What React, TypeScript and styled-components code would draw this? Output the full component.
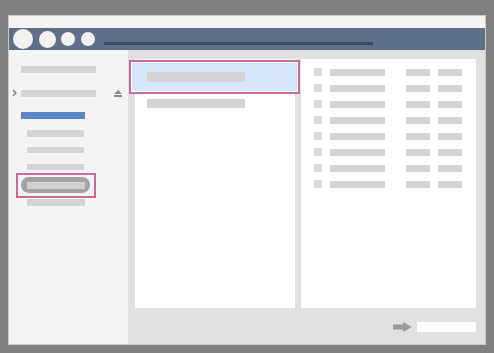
import styled, { createGlobalStyle } from "styled-components";

const GlobalStyle = createGlobalStyle`
  html, body {
    margin: 0;
    padding: 0;
    background: #808080;
    font-family: "Liberation Sans", Arial, sans-serif;
  }
`;

const Page = styled.div`
  width: 494px;
  height: 353px;
  padding: 15px 0 0 8px;
  box-sizing: border-box;
  background: #808080;
`;

const Window = styled.div`
  width: 478px;
  height: 330px;
  display: flex;
  flex-direction: column;
  background: #f4f4f4;
  outline: 1px solid #c9c9c9;
  outline-offset: -1px;
`;

const TitleStrip = styled.div`
  height: 13px;
  background: #f4f4f4;
`;

const Toolbar = styled.div`
  height: 22px;
  background: #5e7089;
  display: flex;
  align-items: center;
  padding-left: 5px;
`;

const Circle = styled.div<{ $size: number; $gap: number }>`
  width: ${({ $size }) => $size}px;
  height: ${({ $size }) => $size}px;
  border-radius: 50%;
  background: #f2f2f2;
  margin-left: ${({ $gap }) => $gap}px;
  flex-shrink: 0;
`;

const PathLine = styled.div`
  width: 269px;
  height: 3px;
  background: #3e4a5b;
  margin-left: 9px;
  align-self: flex-end;
  margin-bottom: 5px;
`;

const Body = styled.div`
  flex: 1;
  display: flex;
  min-height: 0;
`;

const Sidebar = styled.div`
  width: 120px;
  background: #f4f4f4;
  display: flex;
  flex-direction: column;
  padding-top: 16px;
  box-sizing: border-box;
`;

const Bar = styled.div<{ $w: number; $h?: number; $color?: string; $ml?: number }>`
  width: ${({ $w }) => $w}px;
  height: ${({ $h }) => $h ?? 7}px;
  margin-left: ${({ $ml }) => $ml ?? 0}px;
  background: ${({ $color }) => $color ?? "#d4d4d4"};
  flex-shrink: 0;
`;

const SideItem = styled.div<{ $top: number; $left: number }>`
  margin-top: ${({ $top }) => $top}px;
  margin-left: ${({ $left }) => $left}px;
  display: flex;
  align-items: center;
`;

const DeviceRow = styled.div`
  margin-top: 16px;
  padding-left: 4px;
  display: flex;
  align-items: center;
  height: 8px;
`;

const Chevron = styled.svg`
  width: 5px;
  height: 8px;
  margin-right: 4px;
`;

const Eject = styled.svg`
  width: 8px;
  height: 7px;
  margin-left: 18px;
`;

const SelectedSide = styled.div`
  position: relative;
  margin: 7px 0 0 13px;
  width: 69px;
  height: 16px;
  border-radius: 8px;
  background: #a3a3a3;
  display: flex;
  align-items: center;
  justify-content: center;
`;

const PinkFrame = styled.div<{ $t: number; $r: number; $b: number; $l: number }>`
  position: absolute;
  top: ${({ $t }) => $t}px;
  right: ${({ $r }) => $r}px;
  bottom: ${({ $b }) => $b}px;
  left: ${({ $l }) => $l}px;
  border: 2px solid #c96c9d;
  pointer-events: none;
`;

const Main = styled.div`
  flex: 1;
  background: #e1e1e1;
  display: flex;
  flex-direction: column;
`;

const Panels = styled.div`
  display: flex;
  gap: 6px;
  padding: 9px 10px 0 7px;
`;

const Panel = styled.div<{ $w: number }>`
  width: ${({ $w }) => $w}px;
  height: 249px;
  background: #ffffff;
  display: flex;
  flex-direction: column;
`;

const FolderList = styled(Panel)`
  padding-top: 4px;
  box-sizing: border-box;
`;

const FolderRow = styled.div`
  position: relative;
  height: 27px;
  display: flex;
  align-items: center;
  padding-left: 12px;
`;

const RowHighlight = styled.span`
  position: absolute;
  top: -3px;
  bottom: -4px;
  left: -6px;
  right: -5px;
  background: #d6e7f9;
  border: 2px solid #c96c9d;
  box-shadow: inset 0 0 0 1px #ffffff;
`;

const FolderBar = styled(Bar)`
  position: relative;
  z-index: 1;
`;

const FileList = styled(Panel)`
  padding-top: 9px;
  box-sizing: border-box;
  gap: 8px;
`;

const FileRow = styled.div`
  display: flex;
  align-items: center;
  height: 8px;
  padding-left: 13px;
`;

const Check = styled.div`
  width: 8px;
  height: 8px;
  background: #d9d9d9;
`;

const Footer = styled.div`
  flex: 1;
  display: flex;
  justify-content: flex-end;
  align-items: flex-start;
  gap: 5px;
  padding: 14px 10px 0 0;
`;

const Arrow = styled.svg`
  width: 19px;
  height: 10px;
`;

const NameInput = styled.div`
  width: 59px;
  height: 10px;
  background: #ffffff;
`;

const fileRows = Array.from({ length: 8 });

export default function App() {
  return (
    <>
      <GlobalStyle />
      <Page>
        <Window>
          <TitleStrip />
          <Toolbar>
            <Circle $size={20} $gap={0} />
            <Circle $size={17} $gap={6} />
            <Circle $size={14} $gap={5} />
            <Circle $size={14} $gap={6} />
            <PathLine />
          </Toolbar>
          <Body>
            <Sidebar>
              <SideItem $top={0} $left={13}>
                <Bar $w={75} />
              </SideItem>
              <DeviceRow>
                <Chevron viewBox="0 0 5 8">
                  <polyline points="1,1 4,4 1,7" fill="none" stroke="#777" strokeWidth="1.2" />
                </Chevron>
                <Bar $w={75} />
                <Eject viewBox="0 0 8 7">
                  <polygon points="4,0 8,4 0,4" fill="#8a8a8a" />
                  <rect x="0" y="5" width="8" height="2" fill="#8a8a8a" />
                </Eject>
              </DeviceRow>
              <SideItem $top={15} $left={13}>
                <Bar $w={64} $color="#5b86c4" />
              </SideItem>
              <SideItem $top={11} $left={19}>
                <Bar $w={57} />
              </SideItem>
              <SideItem $top={10} $left={19}>
                <Bar $w={57} $h={6} />
              </SideItem>
              <SideItem $top={11} $left={19}>
                <Bar $w={57} $h={6} />
              </SideItem>
              <SelectedSide>
                <Bar $w={58} $color="#d2d2d2" />
                <PinkFrame $t={-4} $r={-6} $b={-5} $l={-5} />
              </SelectedSide>
              <SideItem $top={6} $left={19}>
                <Bar $w={58} />
              </SideItem>
            </Sidebar>
            <Main>
              <Panels>
                <FolderList $w={160}>
                  <FolderRow>
                    <RowHighlight />
                    <FolderBar $w={98} $h={10} />
                  </FolderRow>
                  <FolderRow>
                    <FolderBar $w={98} $h={9} />
                  </FolderRow>
                </FolderList>
                <FileList $w={175}>
                  {fileRows.map((_, i) => (
                    <FileRow key={i}>
                      <Check />
                      <Bar $w={55} $ml={8} />
                      <Bar $w={24} $ml={21} />
                      <Bar $w={24} $ml={8} />
                    </FileRow>
                  ))}
                </FileList>
              </Panels>
              <Footer>
                <Arrow viewBox="0 0 19 10">
                  <polygon points="0,2.5 10,2.5 10,0 19,5 10,10 10,7.5 0,7.5" fill="#9a9a9a" />
                </Arrow>
                <NameInput />
              </Footer>
            </Main>
          </Body>
        </Window>
      </Page>
    </>
  );
}
